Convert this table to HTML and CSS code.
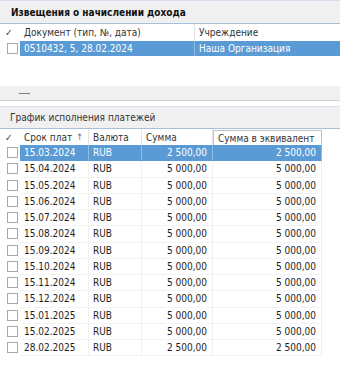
FILE: index.html
```html
<!DOCTYPE html>
<html lang="ru">
<head>
<meta charset="utf-8">
<link rel="stylesheet" href="styles.css">
</head>
<body>
<div class="page">
  <div class="bar bar-bold">Извещения о начислении дохода</div>
  <div class="grid grid-top">
    <div class="hrow">
      <div class="hcell chk">✓</div>
      <div class="hcell sep">Документ (тип, №, дата)</div>
      <div class="hcell">Учреждение</div>
    </div>
    <div class="row sel">
      <div class="cell chk"><span class="box"></span></div>
      <div class="cell sep">0510432, 5, 28.02.2024</div>
      <div class="cell">Наша Организация</div>
    </div>
  </div>
  <div class="spacer"></div>
  <div class="toolbar"><span class="dash"></span></div>
  <div class="bar bar-second">График исполнения платежей</div>
  <div class="grid grid-bottom">
    <div class="hrow">
      <div class="hcell chk">✓</div>
      <div class="hcell sep">Срок плат <span class="arrow">↑</span></div>
      <div class="hcell sep">Валюта</div>
      <div class="hcell sep">Сумма</div>
      <div class="hcell boxed">Сумма в эквивалент</div>
    </div>
    <div class="row sel"><div class="cell chk"><span class="box"></span></div><div class="cell sep">15.03.2024</div><div class="cell sep">RUB</div><div class="cell sep num">2 500,00</div><div class="cell sep num">2 500,00</div></div>
    <div class="row"><div class="cell chk"><span class="box"></span></div><div class="cell sep">15.04.2024</div><div class="cell sep">RUB</div><div class="cell sep num">5 000,00</div><div class="cell sep num">5 000,00</div></div>
    <div class="row"><div class="cell chk"><span class="box"></span></div><div class="cell sep">15.05.2024</div><div class="cell sep">RUB</div><div class="cell sep num">5 000,00</div><div class="cell sep num">5 000,00</div></div>
    <div class="row"><div class="cell chk"><span class="box"></span></div><div class="cell sep">15.06.2024</div><div class="cell sep">RUB</div><div class="cell sep num">5 000,00</div><div class="cell sep num">5 000,00</div></div>
    <div class="row"><div class="cell chk"><span class="box"></span></div><div class="cell sep">15.07.2024</div><div class="cell sep">RUB</div><div class="cell sep num">5 000,00</div><div class="cell sep num">5 000,00</div></div>
    <div class="row"><div class="cell chk"><span class="box"></span></div><div class="cell sep">15.08.2024</div><div class="cell sep">RUB</div><div class="cell sep num">5 000,00</div><div class="cell sep num">5 000,00</div></div>
    <div class="row"><div class="cell chk"><span class="box"></span></div><div class="cell sep">15.09.2024</div><div class="cell sep">RUB</div><div class="cell sep num">5 000,00</div><div class="cell sep num">5 000,00</div></div>
    <div class="row"><div class="cell chk"><span class="box"></span></div><div class="cell sep">15.10.2024</div><div class="cell sep">RUB</div><div class="cell sep num">5 000,00</div><div class="cell sep num">5 000,00</div></div>
    <div class="row"><div class="cell chk"><span class="box"></span></div><div class="cell sep">15.11.2024</div><div class="cell sep">RUB</div><div class="cell sep num">5 000,00</div><div class="cell sep num">5 000,00</div></div>
    <div class="row"><div class="cell chk"><span class="box"></span></div><div class="cell sep">15.12.2024</div><div class="cell sep">RUB</div><div class="cell sep num">5 000,00</div><div class="cell sep num">5 000,00</div></div>
    <div class="row"><div class="cell chk"><span class="box"></span></div><div class="cell sep">15.01.2025</div><div class="cell sep">RUB</div><div class="cell sep num">5 000,00</div><div class="cell sep num">5 000,00</div></div>
    <div class="row"><div class="cell chk"><span class="box"></span></div><div class="cell sep">15.02.2025</div><div class="cell sep">RUB</div><div class="cell sep num">5 000,00</div><div class="cell sep num">5 000,00</div></div>
    <div class="row"><div class="cell chk"><span class="box"></span></div><div class="cell sep">28.02.2025</div><div class="cell sep">RUB</div><div class="cell sep num">2 500,00</div><div class="cell sep num">2 500,00</div></div>
  </div>
</div>
</body>
</html>
```

FILE: styles.css
```css
html, body {
  margin: 0;
  padding: 0;
  background: #ffffff;
}
body {
  font-family: "DejaVu Sans Condensed", "DejaVu Sans", sans-serif;
  font-size: 10px;
  color: #1e1e1e;
}
.page {
  width: 340px;
}
.bar {
  box-sizing: border-box;
  height: 24px;
  background: #f0f0f0;
  border-top: 1px solid #d6e0ec;
  border-bottom: 1px solid #a9c0dc;
  padding-left: 11px;
  display: flex;
  align-items: center;
}
.bar-bold {
  font-weight: bold;
  font-size: 10px;
  color: #111;
}
.bar-second {
  height: 23px;
  padding-left: 10px;
  color: #333;
}
.grid {
  display: grid;
}
.grid-top {
  grid-template-columns: 20px 175px 145px;
}
.grid-bottom {
  grid-template-columns: 20px 69px 53px 71px 109px;
}
.hrow, .row {
  display: contents;
}
.hcell {
  height: 17px;
  display: flex;
  align-items: center;
  padding-left: 4px;
  color: #333;
  white-space: nowrap;
}
.grid-bottom .hcell {
  height: 16px;
}
.hcell.chk {
  padding-left: 5px;
  color: #444;
  font-size: 10px;
}
.hcell.sep {
  border-right: 1px solid #e4e4e4;
}
.hcell.boxed {
  border: 1px solid #c2c2c2;
  border-bottom: none;
  margin-top: 1px;
  height: 15px;
  box-sizing: border-box;
}
.arrow {
  margin-left: 4px;
  font-size: 9px;
  color: #666;
}
.cell {
  height: 16.25px;
  box-sizing: border-box;
  display: flex;
  align-items: center;
  padding-left: 4px;
  white-space: nowrap;
  border-bottom: 1px solid #f3f3f3;
}
.grid-top .cell {
  height: 15px;
  border-bottom: none;
}
.cell.sep {
  border-right: 1px solid #f0f0f0;
}
.cell.num {
  justify-content: flex-end;
  padding-right: 5px;
}
.cell.chk {
  padding-left: 7px;
  border-bottom-color: transparent;
}
.box {
  width: 9px;
  height: 9px;
  border: 1px solid #a8a8a8;
  background: #fff;
}
.row.sel .cell {
  background: #5b9bd5;
  color: #fff;
  border-bottom-color: #5b9bd5;
}
.row.sel .cell.sep {
  border-right-color: #8dbbe3;
}
.row.sel .cell.chk {
  background: #fff;
  border-bottom-color: transparent;
}
.spacer {
  height: 30px;
}
.toolbar {
  box-sizing: border-box;
  height: 15px;
  background: #f0f0f0;
  border-bottom: 1px solid #d2d2d2;
  margin-bottom: 5px;
  padding-left: 19px;
  display: flex;
  align-items: center;
}
.dash {
  width: 11px;
  border-top: 1px solid #7a7a7a;
}
```
